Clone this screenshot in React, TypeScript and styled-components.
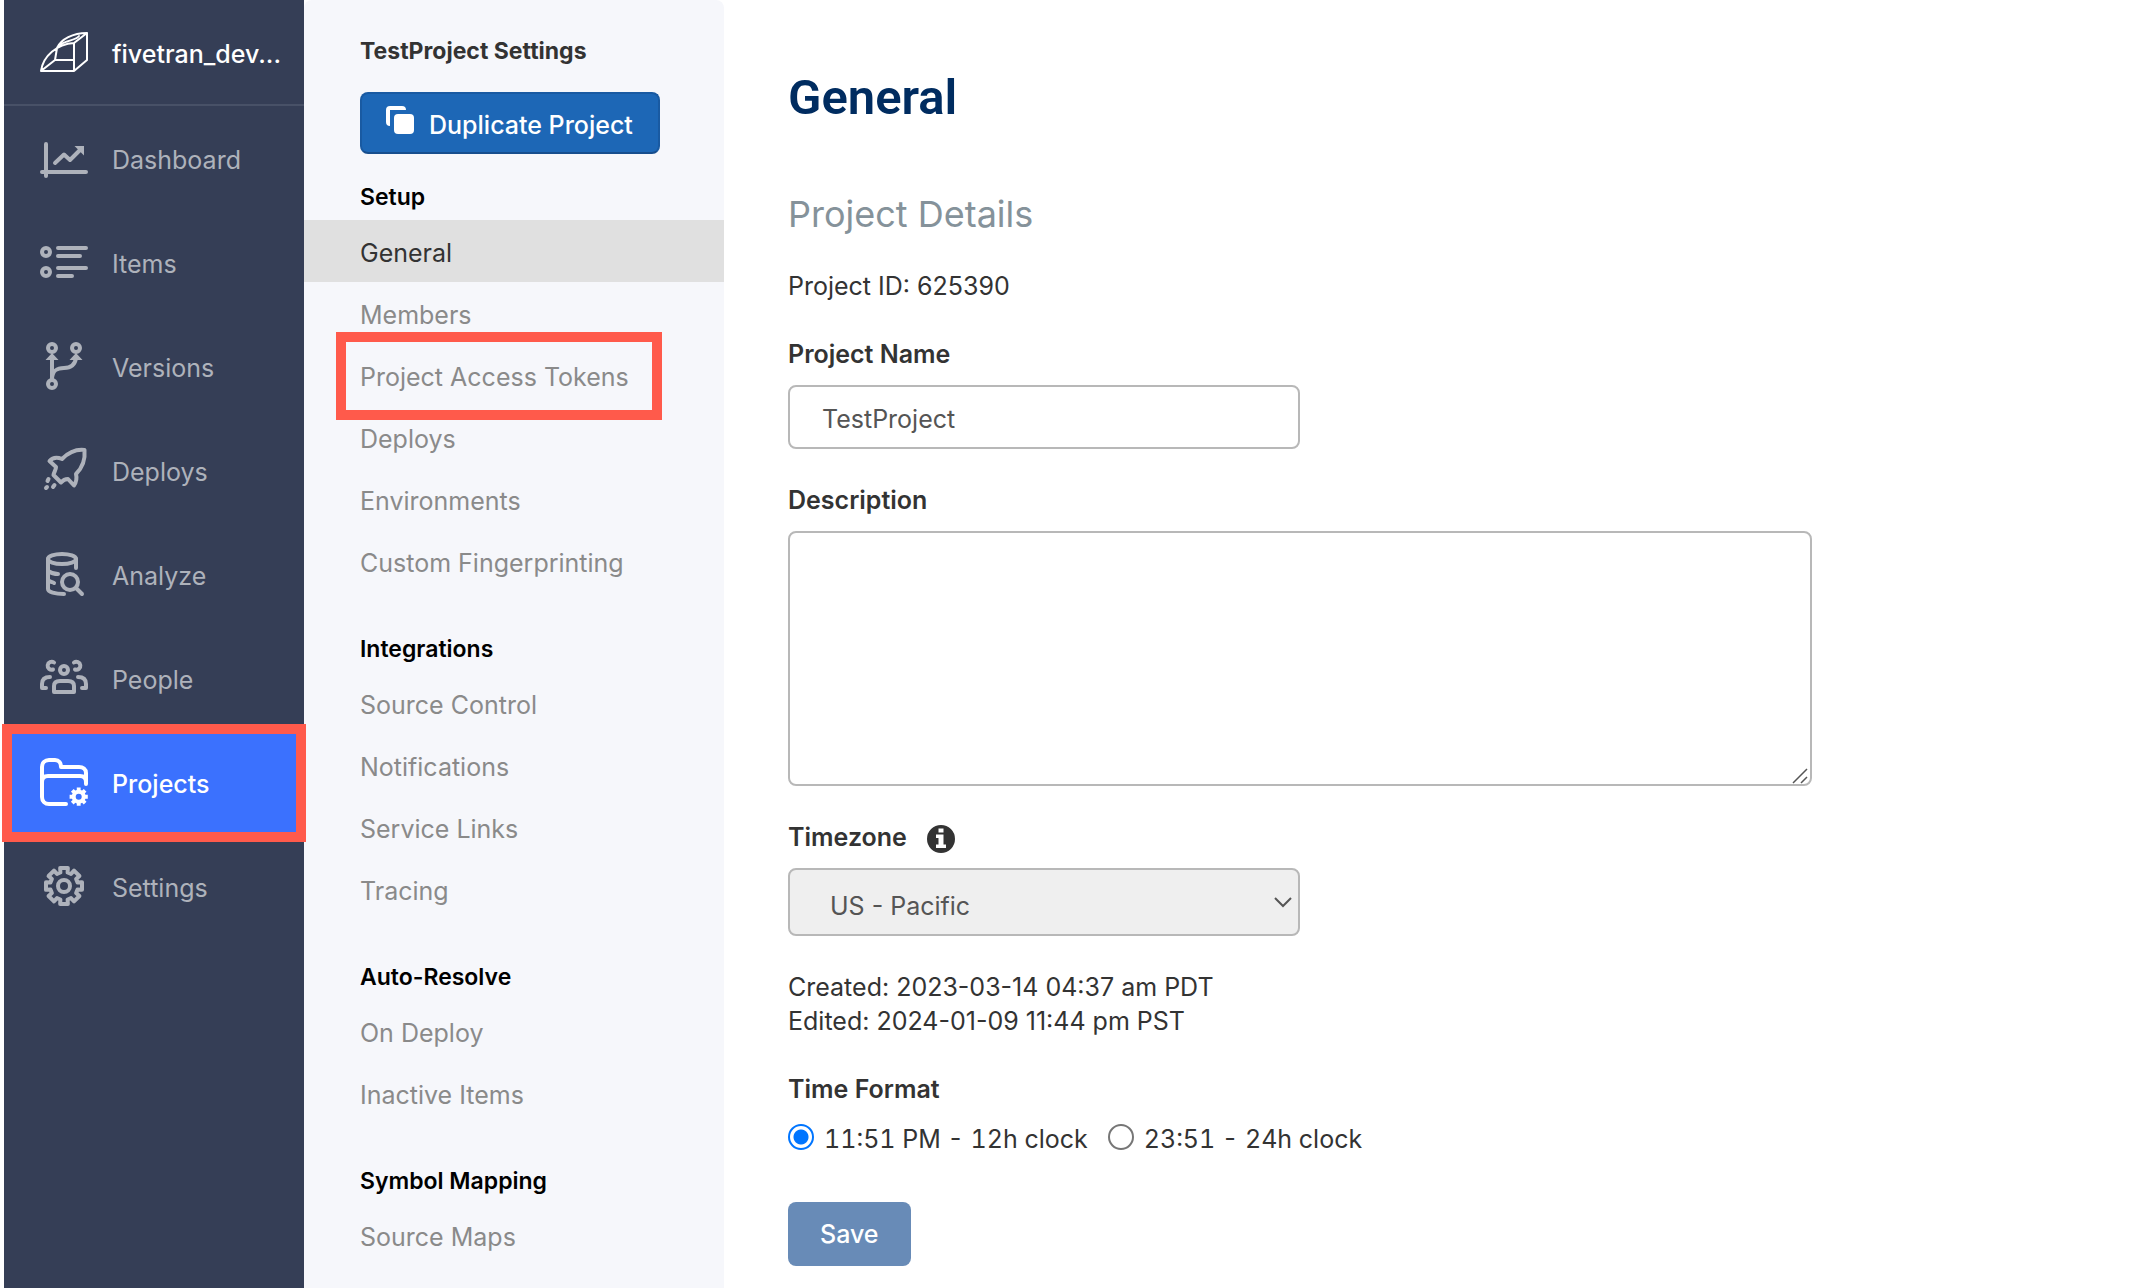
import React from 'react';
import styled, { createGlobalStyle, css } from 'styled-components';

const GlobalStyle = createGlobalStyle`
  *, *::before, *::after { box-sizing: border-box; }
  body {
    margin: 0;
    background: #fff;
    color: #333;
    font-family: Inter, "Liberation Sans", sans-serif;
    font-size: 25px;
    line-height: 34px;
  }
  h1, h2, h3, p, ul, fieldset { margin: 0; padding: 0; border: 0; }
  ul { list-style: none; }
  a { color: inherit; text-decoration: none; }
  button, input, select, textarea { font: inherit; margin: 0; }
`;

const callout = css`
  content: '';
  position: absolute;
  z-index: 2;
  border: 10px solid #ff5a4b;
  pointer-events: none;
`;

const Page = styled.div`
  display: flex;
  min-height: 100vh;
  padding-left: 4px;
`;

/* Primary navigation */

const Sidebar = styled.nav`
  flex: 0 0 300px;
  background: #353e56;
  color: #aeb2bb;
`;

const Account = styled.a`
  display: flex;
  align-items: center;
  gap: 24px;
  height: 106px;
  padding: 4px 20px 0 36px;
  border-bottom: 2px solid #485167;
  color: #fff;
  font-weight: 500;
  white-space: nowrap;
`;

const NavList = styled.ul`
  padding-top: 2px;
`;

const NavLink = styled.a<{ $active?: boolean }>`
  position: relative;
  display: flex;
  align-items: center;
  gap: 24px;
  height: 104px;
  padding-left: 36px;
  ${(p) =>
    p.$active &&
    css`
      background: #3b71fe;
      color: #fff;
      font-weight: 500;
      &::after {
        ${callout}
        inset: -8px -2px -6px;
      }
    `}
`;

const Glyph = styled.svg`
  flex: none;
  width: 48px;
  height: 48px;
  margin-bottom: 4px;
  fill: none;
  stroke: currentColor;
  stroke-width: 4;
  stroke-linecap: round;
  stroke-linejoin: round;
  overflow: visible;
  .solid { fill: currentColor; stroke: none; }
`;

const LogoGlyph = styled(Glyph)`
  height: 40px;
  stroke-width: 2;
`;

/* Project settings navigation */

const Panel = styled.aside`
  flex: 0 0 420px;
  padding-top: 36px;
  background: #f6f7fb;
  border-radius: 8px 8px 0 0;
`;

const PanelTitle = styled.h2`
  margin: 0 56px 26px;
  font-size: 23px;
  font-weight: 700;
  line-height: 30px;
`;

const DuplicateButton = styled.button`
  display: flex;
  align-items: center;
  gap: 15px;
  width: 300px;
  height: 62px;
  margin: 0 56px;
  padding: 4px 0 0 24px;
  border: 2px solid #195aa2;
  border-bottom-color: #174e8d;
  border-radius: 8px;
  background: #1d67b6;
  color: #fff;
  font-weight: 500;
  white-space: nowrap;
`;

const CopyGlyph = styled.svg`
  flex: none;
  width: 28px;
  height: 28px;
  margin-bottom: 10px;
  fill: #fff;
`;

const GroupTitle = styled.h3<{ $first?: boolean }>`
  margin: ${(p) => (p.$first ? 28 : 42)}px 56px 8px;
  color: #000;
  font-size: 23px;
  font-weight: 600;
  line-height: 30px;
`;

const PanelLink = styled.a<{ $active?: boolean; $marked?: boolean }>`
  position: relative;
  display: flex;
  align-items: center;
  height: 62px;
  padding: 4px 56px 0;
  color: ${(p) => (p.$active ? '#333' : '#8a8a8a')};
  background: ${(p) => (p.$active ? '#e0e0e0' : 'transparent')};
  white-space: nowrap;
  ${(p) =>
    p.$marked &&
    css`
      &::after {
        ${callout}
        inset: -12px 62px -14px 32px;
      }
    `}
`;

/* Settings form */

const Main = styled.main`
  flex: 1;
  min-width: 0;
  padding: 68px 64px 20px;
`;

const Title = styled.h1`
  color: #002c60;
  font-family: Roboto, Inter, sans-serif;
  font-size: 49px;
  font-weight: 600;
  line-height: 60px;
`;

const Subtitle = styled.h2`
  margin-top: 63px;
  color: #85929a;
  font-size: 36px;
  font-weight: 400;
  line-height: 46px;
`;

const Form = styled.form`
  display: flex;
  flex-direction: column;
  align-items: flex-start;
  gap: 34px;
  margin-top: 32px;
`;

const Field = styled.div`
  display: flex;
  flex-direction: column;
  align-items: flex-start;
  gap: 14px;
  width: 100%;
`;

const LabelRow = styled.div`
  display: flex;
  align-items: center;
  gap: 20px;
  height: 34px;
`;

const InfoGlyph = styled.svg`
  width: 28px;
  height: 28px;
  margin-top: 4px;
  fill: #333;
`;

const Label = styled.label`
  font-weight: 600;
`;

const control = css`
  display: block;
  width: 100%;
  border: 2px solid #b8b8b8;
  border-radius: 8px;
  color: #555;
  outline: none;
`;

const TextInput = styled.input`
  ${control}
  max-width: 512px;
  height: 64px;
  padding: 4px 32px 0;
  background: #fff;
`;

const AreaBox = styled.div`
  position: relative;
  width: 100%;
  max-width: 1024px;
`;

const TextArea = styled.textarea`
  ${control}
  height: 255px;
  padding: 14px 32px;
  background: #fff;
  resize: none;
`;

const Grip = styled.svg`
  position: absolute;
  right: 4px;
  bottom: 2px;
  width: 16px;
  height: 16px;
  stroke: #555;
  stroke-width: 1.5;
  pointer-events: none;
`;

const SelectBox = styled.div`
  position: relative;
  width: 100%;
  max-width: 512px;
`;

const Select = styled.select`
  ${control}
  appearance: none;
  height: 68px;
  padding: 8px 40px 0;
  background: #efefef;
`;

const Chevron = styled.svg`
  position: absolute;
  right: 8px;
  top: 29px;
  width: 18px;
  height: 11px;
  fill: none;
  stroke: #555;
  stroke-width: 2;
  pointer-events: none;
`;

const RadioGroup = styled.fieldset`
  width: 100%;
`;

const Legend = styled.legend`
  padding: 0;
  margin-bottom: 16px;
  font-weight: 600;
`;

const RadioRow = styled.div`
  display: flex;
  flex-wrap: wrap;
  gap: 20px;
`;

const RadioLabel = styled.label`
  display: flex;
  align-items: center;
  gap: 10px;
  font-variant-numeric: tabular-nums;
`;

const Radio = styled.input`
  appearance: none;
  flex: none;
  width: 26px;
  height: 26px;
  margin-bottom: 4px;
  border: 2px solid #767676;
  border-radius: 50%;
  background: #fff;
  &:checked {
    border-color: #0075ff;
    background: radial-gradient(circle, #0075ff 0 7px, #fff 8px);
  }
`;

const SaveButton = styled.button`
  height: 64px;
  margin-top: 12px;
  padding: 0 32px;
  border: 0;
  border-radius: 8px;
  background: #688bb7;
  color: #fff;
  font-weight: 500;
`;

/* Outline of an eight-toothed gear; tooth and gap widths are in degrees. */
function gearPath(c: number, outer: number, inner: number, tip: number, root: number) {
  const pts: string[] = [];
  for (let i = 0; i < 8; i++) {
    const mid = i * 45 - 90;
    [[-root, inner], [-tip, outer], [tip, outer], [root, inner]].forEach(([deg, r]) => {
      const a = ((mid + deg) * Math.PI) / 180;
      pts.push(`${(c + r * Math.cos(a)).toFixed(2)} ${(c + r * Math.sin(a)).toFixed(2)}`);
    });
  }
  return `M${pts.join('L')}Z`;
}

const Logo = () => (
  <LogoGlyph viewBox="0 0 48 40" aria-hidden="true">
    <path d="M1 39C3 24 17 12 34 11V39ZM34 11L47 1V28L34 39M17 16C21 7 33 1 47 1M17 16L15 28H34M15 28L1 39M20 13C26 8 35 9 39 4" />
  </LogoGlyph>
);

const DashboardIcon = () => (
  <Glyph viewBox="0 0 48 48" aria-hidden="true">
    <path d="M6 10V42M2 38H46M15 29L24 20.500L30 26L40 16" />
    <path className="solid" d="M34.500 12H44V21.500Z" />
  </Glyph>
);

const ItemsIcon = () => (
  <Glyph viewBox="0 0 48 48" aria-hidden="true">
    <circle cx="6" cy="14" r="4" />
    <circle cx="6" cy="34" r="4" />
    <path d="M18 10H46M18 18H40M18 30H46M18 38H32" />
  </Glyph>
);

const VersionsIcon = () => (
  <Glyph viewBox="0 0 48 48" aria-hidden="true">
    <circle cx="12" cy="6" r="4" />
    <circle cx="36" cy="6" r="4" />
    <circle cx="12" cy="42" r="4" />
    <path d="M12 16V37M12 36C13 28 17 26 24 26S35 23 36 16" />
    <path className="solid" d="M12 11L18.500 18H5.500ZM36 11L42.500 18H29.500Z" />
  </Glyph>
);

const DeploysIcon = () => (
  <Glyph viewBox="0 0 48 48" aria-hidden="true">
    <path d="M44.500 4C36 3 28 7 22 13C17 11 13 11 9.500 15L16 21C16 24 14 26 13.500 29L21 36.500C23 34 26 33 28 33L34 39.500C37 35 37 32 36 28C42 22 45.500 14 44.500 4Z" />
    <path d="M8.500 33L7.500 35M7 41L6 42M14.500 39L13 41" />
  </Glyph>
);

const AnalyzeIcon = () => (
  <Glyph viewBox="0 0 48 48" aria-hidden="true">
    <ellipse cx="22" cy="9" rx="14" ry="5" />
    <path d="M8 9V39C8 42 15 44 24 44M8 21C11 23 14 24 18 24M8 30C10 32 12 32 14 33M36 9V18" />
    <circle cx="30" cy="32" r="8" />
    <path d="M36.500 38.500L42 44" />
  </Glyph>
);

const PeopleIcon = () => (
  <Glyph viewBox="0 0 48 48" aria-hidden="true">
    <circle cx="24" cy="16" r="4" />
    <path d="M14 38V32C14 28 17 27 20 27H28C31 27 34 28 34 32V38Z" />
    <path d="M14 8.500A4 4 0 1 0 13 15.500M34 8.500A4 4 0 1 1 35 15.500" />
    <path d="M6 34H2V30C2 25 5 23 10 23M42 34H46V30C46 25 43 23 38 23" />
  </Glyph>
);

const ProjectsIcon = () => (
  <Glyph viewBox="0 0 48 48" aria-hidden="true">
    <path d="M46 26V15C46 11 43 9 39 9H21C21 5 19 2 15 2H9C5 2 2 5 2 9V39C2 43 5 46 9 46H26M2 24C2 20 4 18 8 18H40C44 18 46 20 46 24" />
    <path
      className="solid"
      fillRule="evenodd"
      d={`${gearPath(38.7, 9.3, 7, 12, 16)}M41.700 38.700A3 3 0 1 0 35.700 38.700A3 3 0 1 0 41.700 38.700Z`}
    />
  </Glyph>
);

const SettingsIcon = () => (
  <Glyph viewBox="0 0 48 48" aria-hidden="true">
    <path d={gearPath(24, 18.4, 14, 12, 15)} />
    <circle cx="24" cy="24" r="6" />
  </Glyph>
);

const navItems = [
  { label: 'Dashboard', Icon: DashboardIcon },
  { label: 'Items', Icon: ItemsIcon },
  { label: 'Versions', Icon: VersionsIcon },
  { label: 'Deploys', Icon: DeploysIcon },
  { label: 'Analyze', Icon: AnalyzeIcon },
  { label: 'People', Icon: PeopleIcon },
  { label: 'Projects', Icon: ProjectsIcon, active: true },
  { label: 'Settings', Icon: SettingsIcon },
];

const groups = [
  {
    title: 'Setup',
    links: ['General', 'Members', 'Project Access Tokens', 'Deploys', 'Environments', 'Custom Fingerprinting'],
  },
  { title: 'Integrations', links: ['Source Control', 'Notifications', 'Service Links', 'Tracing'] },
  { title: 'Auto-Resolve', links: ['On Deploy', 'Inactive Items'] },
  { title: 'Symbol Mapping', links: ['Source Maps'] },
];

export default function App() {
  return (
    <>
      <GlobalStyle />
      <Page>
        <Sidebar aria-label="Main">
          <Account href="#account">
            <Logo />
            <span>fivetran_dev...</span>
          </Account>
          <NavList>
            {navItems.map(({ label, Icon, active }) => (
              <li key={label}>
                <NavLink href={`#${label.toLowerCase()}`} $active={active}>
                  <Icon />
                  <span>{label}</span>
                </NavLink>
              </li>
            ))}
          </NavList>
        </Sidebar>

        <Panel>
          <PanelTitle>TestProject Settings</PanelTitle>
          <DuplicateButton type="button">
            <CopyGlyph viewBox="0 0 28 28" aria-hidden="true">
              <path d="M4 20A4 4 0 0 1 0 16V4A4 4 0 0 1 4 0H16A4 4 0 0 1 20 4H4Z" />
              <rect x="8" y="8" width="20" height="20" rx="4" />
            </CopyGlyph>
            <span>Duplicate Project</span>
          </DuplicateButton>
          {groups.map((group, i) => (
            <section key={group.title}>
              <GroupTitle $first={i === 0}>{group.title}</GroupTitle>
              <ul>
                {group.links.map((link) => (
                  <li key={link}>
                    <PanelLink
                      href={`#${link.toLowerCase().replace(/ /g, '-')}`}
                      $active={link === 'General'}
                      $marked={link === 'Project Access Tokens'}
                    >
                      {link}
                    </PanelLink>
                  </li>
                ))}
              </ul>
            </section>
          ))}
        </Panel>

        <Main>
          <Title>General</Title>
          <Subtitle>Project Details</Subtitle>
          <Form onSubmit={(e) => e.preventDefault()}>
            <p>Project ID: 625390</p>
            <Field>
              <Label htmlFor="name">Project Name</Label>
              <TextInput id="name" type="text" defaultValue="TestProject" />
            </Field>
            <Field>
              <Label htmlFor="description">Description</Label>
              <AreaBox>
                <TextArea id="description" />
                <Grip viewBox="0 0 16 16" aria-hidden="true">
                  <path d="M1 15L15 1M9 15L15 9" />
                </Grip>
              </AreaBox>
            </Field>
            <Field>
              <LabelRow>
                <Label htmlFor="timezone">Timezone</Label>
                <InfoGlyph viewBox="0 0 28 28" aria-hidden="true">
                  <path
                    fillRule="evenodd"
                    d="M14 0A14 14 0 1 1 14 28A14 14 0 1 1 14 0ZM11.500 3.500V7.500H16.500V3.500ZM9 9.500V13H11.500V19.500H9V23H19V19.500H16.500V9.500Z"
                  />
                </InfoGlyph>
              </LabelRow>
              <SelectBox>
                <Select id="timezone" defaultValue="pacific">
                  <option value="pacific">US - Pacific</option>
                </Select>
                <Chevron viewBox="0 0 18 11" aria-hidden="true">
                  <path d="M1 1L9 9L17 1" />
                </Chevron>
              </SelectBox>
            </Field>
            <p>
              Created: 2023-03-14 04:37 am PDT
              <br />
              Edited: 2024-01-09 11:44 pm PST
            </p>
            <RadioGroup>
              <Legend>Time Format</Legend>
              <RadioRow>
                <RadioLabel>
                  <Radio type="radio" name="clock" value="12" defaultChecked />
                  11:51 PM - 12h clock
                </RadioLabel>
                <RadioLabel>
                  <Radio type="radio" name="clock" value="24" />
                  23:51 - 24h clock
                </RadioLabel>
              </RadioRow>
            </RadioGroup>
            <SaveButton type="submit">Save</SaveButton>
          </Form>
        </Main>
      </Page>
    </>
  );
}
